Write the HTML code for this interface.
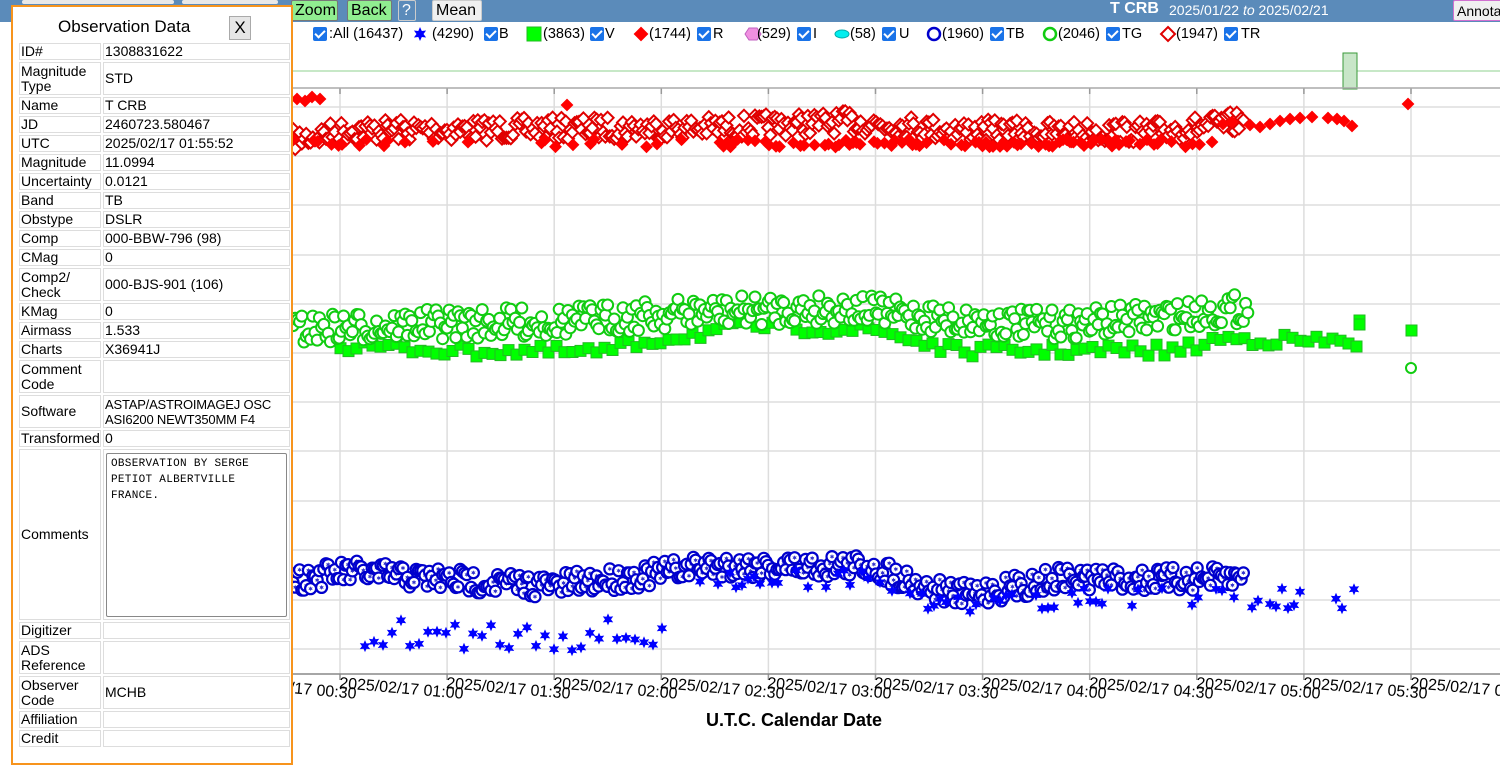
<!DOCTYPE html>
<html><head><meta charset="utf-8">
<style>
*{box-sizing:border-box}
body{margin:0;width:1500px;height:750px;overflow:hidden;background:#fff;font-family:"Liberation Sans",Arial,sans-serif;position:relative}
.hdr{position:absolute;left:0;top:0;width:1500px;height:22px;background:#5b8bba}
.btn{position:absolute;top:0;height:21px;font-size:16px;line-height:20px;padding:0 3px;border-radius:2px;color:#000}
.lg{position:absolute;top:25px;font-size:14.5px;line-height:18px;color:#000;white-space:nowrap}
.cb{position:absolute;top:27px;width:14px;height:14px;background:#1a73e8;border-radius:2px}
.cb:after{content:"";position:absolute;left:4px;top:1px;width:4px;height:8px;border:solid #fff;border-width:0 2px 2px 0;transform:rotate(45deg)}
.xl{position:absolute;top:675px;font-size:16px;white-space:nowrap;transform:rotate(5deg);transform-origin:0 0;color:#000}
#panel{position:absolute;left:11px;top:5px;width:282px;height:760px;background:#fff;border:2px solid #f7941d}
table{position:absolute;left:4px;top:34px;border-collapse:separate;border-spacing:2px;font-size:14px;width:275px;table-layout:fixed}
td{border:1px solid #ddd;padding:0 1px;line-height:15px;vertical-align:middle;overflow:hidden}
</style></head><body>
<div class="hdr"></div>
<div class="btn" style="left:22px;width:152px;background:#e8e8e8;top:0;height:4px"></div>
<div class="btn" style="left:182px;width:96px;background:#e8e8e8;top:0;height:4px"></div>
<div class="btn" style="left:291px;width:47px;background:#90ee90;border:1px solid #777">Zoom</div>
<div class="btn" style="left:347px;width:45px;background:#90ee90;border:1px solid #777">Back</div>
<div class="btn" style="left:398px;width:18px;background:#5b8bba;border:1px solid #ccc;color:#fff">?</div>
<div class="btn" style="left:432px;width:50px;background:#f0f0f0;border:1px solid #ccc">Mean</div>
<div style="position:absolute;left:1110px;top:0;color:#fff;font-size:16px;font-weight:bold;line-height:18px">T CRB</div>
<div style="position:absolute;left:1169px;top:1px;color:#fff;font-size:14px;line-height:18px">2025/01/22 <i>to</i> 2025/02/21</div>
<div class="btn" style="left:1453px;width:60px;background:#f0f0f0;border:1px solid #d070d0;font-size:14px;top:0">Annotate</div>

<div id="plotwrap" style="position:absolute;left:0;top:0;width:1500px;height:750px"></div>

<div class="cb" style="left:313px"></div><div class="lg" style="left:329px">:All (16437)</div>
<div class="lg" style="left:432px">(4290)</div><div class="cb" style="left:484px"></div><div class="lg" style="left:499px">B</div>
<div class="lg" style="left:543px">(3863)</div><div class="cb" style="left:590px"></div><div class="lg" style="left:605px">V</div>
<div class="lg" style="left:649px">(1744)</div><div class="cb" style="left:697px"></div><div class="lg" style="left:713px">R</div>
<div class="lg" style="left:757px">(529)</div><div class="cb" style="left:797px"></div><div class="lg" style="left:813px">I</div>
<div class="lg" style="left:850px">(58)</div><div class="cb" style="left:882px"></div><div class="lg" style="left:899px">U</div>
<div class="lg" style="left:942px">(1960)</div><div class="cb" style="left:990px"></div><div class="lg" style="left:1006px">TB</div>
<div class="lg" style="left:1058px">(2046)</div><div class="cb" style="left:1106px"></div><div class="lg" style="left:1122px">TG</div>
<div class="lg" style="left:1176px">(1947)</div><div class="cb" style="left:1224px"></div><div class="lg" style="left:1241px">TR</div>

<div class="xl" style="left:233px">2025/02/17 00:30</div>
<div class="xl" style="left:340px">2025/02/17 01:00</div>
<div class="xl" style="left:447px">2025/02/17 01:30</div>
<div class="xl" style="left:554px">2025/02/17 02:00</div>
<div class="xl" style="left:661px">2025/02/17 02:30</div>
<div class="xl" style="left:768px">2025/02/17 03:00</div>
<div class="xl" style="left:875px">2025/02/17 03:30</div>
<div class="xl" style="left:983px">2025/02/17 04:00</div>
<div class="xl" style="left:1090px">2025/02/17 04:30</div>
<div class="xl" style="left:1197px">2025/02/17 05:00</div>
<div class="xl" style="left:1304px">2025/02/17 05:30</div>
<div class="xl" style="left:1411px">2025/02/17 06:00</div>
<div style="position:absolute;left:706px;top:710px;font-size:18px;font-weight:bold">U.T.C. Calendar Date</div>

<div id="panel">
<div style="position:absolute;left:45px;top:10px;font-size:17px">Observation Data</div>
<div style="position:absolute;left:216px;top:9px;width:22px;height:24px;background:#e6e6e6;border:1px solid #aaa;font-size:17px;text-align:center;line-height:22px">X</div>
<table>
<colgroup><col style="width:82px"><col></colgroup>
<tr style="height:17px"><td>ID#</td><td>1308831622</td></tr>
<tr style="height:33px"><td>Magnitude Type</td><td>STD</td></tr>
<tr style="height:17px"><td>Name</td><td>T CRB</td></tr>
<tr style="height:17px"><td>JD</td><td>2460723.580467</td></tr>
<tr style="height:17px"><td>UTC</td><td>2025/02/17 01:55:52</td></tr>
<tr style="height:17px"><td>Magnitude</td><td>11.0994</td></tr>
<tr style="height:17px"><td>Uncertainty</td><td>0.0121</td></tr>
<tr style="height:17px"><td>Band</td><td>TB</td></tr>
<tr style="height:17px"><td>Obstype</td><td>DSLR</td></tr>
<tr style="height:17px"><td>Comp</td><td>000-BBW-796 (98)</td></tr>
<tr style="height:17px"><td>CMag</td><td>0</td></tr>
<tr style="height:33px"><td>Comp2/ Check</td><td>000-BJS-901 (106)</td></tr>
<tr style="height:17px"><td>KMag</td><td>0</td></tr>
<tr style="height:17px"><td>Airmass</td><td>1.533</td></tr>
<tr style="height:17px"><td>Charts</td><td>X36941J</td></tr>
<tr style="height:33px"><td>Comment Code</td><td></td></tr>
<tr style="height:33px"><td>Software</td><td style="font-size:13px;letter-spacing:-0.2px">ASTAP/ASTROIMAGEJ OSC ASI6200 NEWT350MM F4</td></tr>
<tr style="height:17px"><td>Transformed</td><td>0</td></tr>
<tr style="height:171px"><td>Comments</td><td style="padding:2px"><div style="height:164px;border:1px solid #888;border-radius:2px;font-family:'Liberation Mono',monospace;font-size:11px;line-height:16px;padding:2px 4px;letter-spacing:0.3px">OBSERVATION BY SERGE PETIOT ALBERTVILLE FRANCE.</div></td></tr>
<tr style="height:17px"><td>Digitizer</td><td></td></tr>
<tr style="height:33px"><td>ADS Reference</td><td></td></tr>
<tr style="height:33px"><td>Observer Code</td><td>MCHB</td></tr>
<tr style="height:17px"><td>Affiliation</td><td></td></tr>
<tr style="height:17px"><td>Credit</td><td></td></tr>
</table>
</div>

<script>
(function(){
var s='<svg xmlns="http://www.w3.org/2000/svg" width="1500" height="750">';
s+='<line x1="293" y1="71" x2="1500" y2="71" stroke="#8fd08f" stroke-width="1"/>';
s+='<rect x="1343" y="53" width="14" height="36" fill="#c8e6c8" stroke="#3a9a3a"/>';
var hl=[107,156,205,255,304,353,402,451,501,550,600,649];
for(var j=0;j<hl.length;j++){s+='<line x1="293" y1="'+hl[j]+'" x2="1500" y2="'+hl[j]+'" stroke="#ddd" stroke-width="1.5"/>';}
for(var i=0;i<11;i++){var gx=340+i*107.1;s+='<line x1="'+gx+'" y1="88" x2="'+gx+'" y2="680" stroke="#ddd" stroke-width="1.5"/>';s+='<line x1="'+gx+'" y1="88" x2="'+gx+'" y2="94" stroke="#999" stroke-width="1.5"/><line x1="'+gx+'" y1="674" x2="'+gx+'" y2="680" stroke="#999" stroke-width="1.5"/>';}
s+='<line x1="293" y1="88" x2="1500" y2="88" stroke="#aaa" stroke-width="1.5"/><line x1="293" y1="674" x2="1500" y2="674" stroke="#888" stroke-width="1.5"/>';
var seed=7;function r(){seed=(seed*16807)%2147483647;return (seed-1)/2147483646;}
function f(v){return (Math.round(v*10)/10);}
function interp(pts,x){for(var k=0;k<pts.length-1;k++){if(x<=pts[k+1][0]){var t=(x-pts[k][0])/(pts[k+1][0]-pts[k][0]);return pts[k][1]+t*(pts[k+1][1]-pts[k][1]);}}return pts[pts.length-1][1];}
function star(x,y,R,fill){var d="";for(var k=0;k<12;k++){var a=k*Math.PI/6-Math.PI/2,rr=(k%2)?R*0.5:R;d+=(k?"L":"M")+f(x+rr*Math.cos(a))+" "+f(y+rr*Math.sin(a));}return '<path d="'+d+'Z" fill="'+fill+'"/>';}
function dia(x,y,R,fl,st){x=f(x);y=f(y);return '<path d="M'+x+' '+(y-R)+'L'+(x+R)+' '+y+'L'+x+' '+(y+R)+'L'+(x-R)+' '+y+'Z" fill="'+fl+'" stroke="'+st+'" stroke-width="2"/>';}
var x,y,b;
var trC=[[293,140],[350,130],[450,130],[600,128],[700,128],[850,122],[950,130],[1050,132],[1150,132],[1245,122]];
for(x=293;x<1245;x+=2.2){y=interp(trC,x)+(r()-0.5)*22;s+=dia(x,y,6,"#fff","#e00000");}
for(x=293;x<1200;x+=3.5){if(x<720&&r()<0.75)continue;if(r()<0.3)continue;y=143+(r()-0.5)*8;s+=dia(x,y,5,"#f00","#f00");}
var rp=[[297,99],[305,101],[312,97],[320,99],[567,105],[1408,104],[1212,142],[1223,124],[1232,122],[1250,125],[1260,127],[1270,124],[1280,121],[1290,119],[1300,118],[1312,117],[1328,118],[1337,119],[1344,121],[1352,126]];
for(j=0;j<rp.length;j++)s+=dia(rp[j][0],rp[j][1],5,"#f00","#f00");
var vC=[[340,345],[450,350],[600,352],[650,340],[750,325],[880,330],[950,350],[1050,350],[1180,350],[1220,338],[1360,342]];
for(x=340;x<1360;x+=8){y=interp(vC,x)+(r()-0.5)*12;s+='<rect x="'+(x-5)+'" y="'+f(y-5)+'" width="11" height="11" fill="#0f0" stroke="#2b2" stroke-width="1"/>';}
var gp=[[1411,330],[1359,320],[1359,324]];
for(j=0;j<gp.length;j++)s+='<rect x="'+(gp[j][0]-5)+'" y="'+(gp[j][1]-5)+'" width="11" height="11" fill="#0f0" stroke="#2b2"/>';
var gC=[[293,330],[400,325],[550,322],[700,312],[850,308],[950,320],[1050,325],[1150,318],[1250,308]];
for(x=293;x<1250;x+=2.2){y=interp(gC,x)+(r()-0.5)*30;s+='<circle cx="'+f(x)+'" cy="'+f(y)+'" r="5.5" fill="#fff" stroke="#1c1" stroke-width="2"/>';}
s+='<circle cx="1411" cy="368" r="5" fill="#fff" stroke="#1c1" stroke-width="2"/>';
var bC=[[293,580],[350,572],[450,580],[550,586],[650,575],[700,566],[870,566],[920,585],[960,595],[1010,588],[1060,578],[1150,580],[1245,578]];
for(x=293;x<1245;x+=2.2){y=interp(bC,x)+(r()-0.5)*24;s+='<circle cx="'+f(x)+'" cy="'+f(y)+'" r="5.5" fill="#fff" stroke="#00c" stroke-width="2.2"/>'+star(x,y,2.5,"#33c");}
for(x=365;x<665;x+=9){y=635+(r()-0.5)*32;s+=star(x,y,6,"#00f");}
for(x=700;x<1360;x+=6){if(r()<0.35)continue;y=(x<1000?interp(bC,x)+12:598)+(r()-0.5)*22;s+=star(x,y,6,"#00f");}
s+=star(420,34,7,"#00f");
s+='<rect x="527" y="27" width="14" height="14" fill="#0f0" stroke="#2b2"/>';
s+=dia(641,34,6,"#f00","#f00");
s+='<path d="M745 34L749 28L757 28L761 34L757 40L749 40Z" fill="#f090e0" stroke="#c060c0"/>';
s+='<ellipse cx="842" cy="34" rx="7" ry="4" fill="#0ee" stroke="#0aa"/>';
s+='<circle cx="934" cy="34" r="6" fill="#fff" stroke="#00c" stroke-width="2.5"/>';
s+='<circle cx="1050" cy="34" r="6" fill="#fff" stroke="#1c1" stroke-width="2.5"/>';
s+=dia(1168,34,7,"#fff","#e00000");
s+='</svg>';
document.getElementById('plotwrap').innerHTML=s;
})();
</script>
</body></html>
